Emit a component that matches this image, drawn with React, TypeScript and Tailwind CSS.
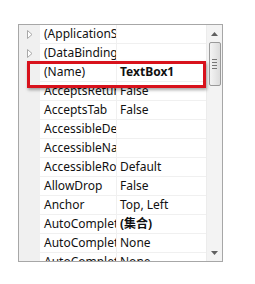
import React from "react";

const rows: { name: string; value: string; expand?: boolean; bold?: boolean }[] = [
  { name: "(ApplicationSettings)", value: "", expand: true },
  { name: "(DataBindings)", value: "", expand: true },
  { name: "(Name)", value: "TextBox1", bold: true },
  { name: "AcceptsReturn", value: "False" },
  { name: "AcceptsTab", value: "False" },
  { name: "AccessibleDescription", value: "" },
  { name: "AccessibleName", value: "" },
  { name: "AccessibleRole", value: "Default" },
  { name: "AllowDrop", value: "False" },
  { name: "Anchor", value: "Top, Left" },
  { name: "AutoCompleteCustomSource", value: "(集合)", bold: true },
  { name: "AutoCompleteMode", value: "None" },
  { name: "AutoCompleteSource", value: "None" },
];

function Tri() {
  return (
    <svg width="6" height="9" viewBox="0 0 6 9" className="block">
      <path d="M0.5 0.5 L5 4.5 L0.5 8.5 Z" fill="white" stroke="#a8a8a8" strokeWidth="1" />
    </svg>
  );
}

export default function App() {
  return (
    <div
      className="w-[255px] h-[284px] bg-white pl-[18px] pt-[24px]"
      style={{ fontFamily: '"Noto Sans", "Noto Sans CJK SC", sans-serif' }}
    >
      <div className="relative w-[205px] h-[238px] border border-[#a7a7a7] flex bg-white">
        <div className="flex-1 overflow-hidden flex flex-col">
          {rows.map((r, i) => (
            <div key={i} className="flex h-[19px] shrink-0">
              <div className="w-[21px] shrink-0 bg-[#f0f0f0] flex items-center justify-center pl-[1px]">
                {r.expand ? <Tri /> : null}
              </div>
              <div className="w-[77px] shrink-0 border-b border-r border-[#f0f0f0] pl-[4px] overflow-hidden whitespace-nowrap text-[12px] leading-[18px] text-[#111]">
                {r.name}
              </div>
              <div
                className={`flex-1 border-b border-[#f0f0f0] pl-[3px] overflow-hidden whitespace-nowrap text-[12px] leading-[18px] text-[#111] ${
                  r.bold ? "font-bold" : ""
                }`}
              >
                {r.value}
              </div>
            </div>
          ))}
        </div>
        <div className="w-[16px] shrink-0 bg-[#f3f3f3] border-l border-[#ececec] flex flex-col items-center">
          <div className="h-[17px] w-full flex items-center justify-center">
            <svg width="7" height="4" viewBox="0 0 7 4">
              <path d="M0 4 L3.5 0 L7 4 Z" fill="#606060" />
            </svg>
          </div>
          <div className="w-[12px] h-[44px] rounded-[2px] border border-[#9a9a9a] bg-gradient-to-r from-[#f4f4f4] to-[#dcdcdc] flex flex-col items-center justify-center gap-[2px]">
            <div className="w-[5px] h-[1px] bg-[#777]" />
            <div className="w-[5px] h-[1px] bg-[#777]" />
            <div className="w-[5px] h-[1px] bg-[#777]" />
            <div className="w-[5px] h-[1px] bg-[#777]" />
          </div>
          <div className="flex-1" />
          <div className="h-[17px] w-full flex items-center justify-center">
            <svg width="7" height="4" viewBox="0 0 7 4">
              <path d="M0 0 L3.5 4 L7 0 Z" fill="#606060" />
            </svg>
          </div>
        </div>
        <div className="absolute left-[8px] top-[36px] w-[179px] h-[27px] border-[3px] border-[#d8121c] shadow-[1px_2px_3px_rgba(0,0,0,0.35)]" />
      </div>
    </div>
  );
}
